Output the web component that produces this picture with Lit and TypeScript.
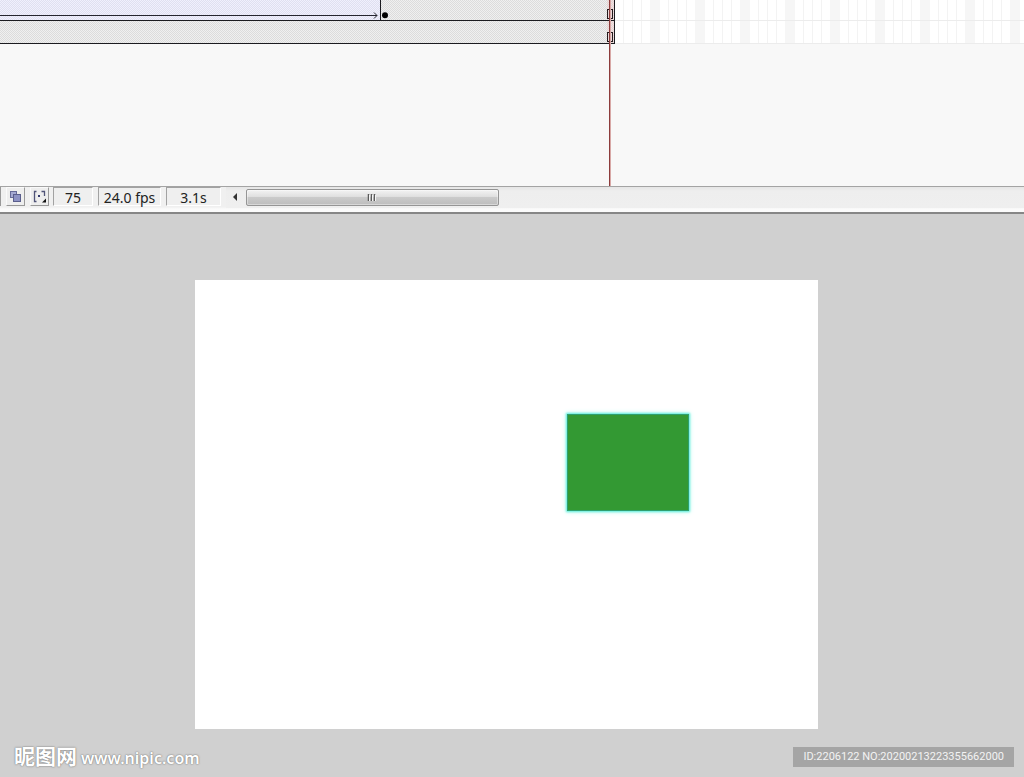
import { LitElement, html, css } from "lit";
import { customElement } from "lit/decorators.js";

@customElement("timeline-panel")
class TimelinePanel extends LitElement {
  static styles = css`
    :host {
      display: block;
      position: relative;
      height: 186px;
      background: #f8f8f8;
      overflow: hidden;
    }
    .row {
      display: flex;
      box-sizing: border-box;
      height: 23px;
    }
    .row.first {
      height: 21px;
    }
    .span {
      box-sizing: border-box;
      border-bottom: 1px solid #1c1c20;
      flex: none;
      position: relative;
    }
    .static {
      background:
        linear-gradient(#f0c8c866, #f0c8c866) right / 7px 100% no-repeat,
        repeating-conic-gradient(#dcdcdc 0 25%, #f0f0f0 0 50%) 0 0 / 2px 2px;
      border-right: 1px solid #1c1c20;
      width: 234px;
    }
    .static.full {
      width: 615px;
    }
    .tween {
      width: 381px;
      background: repeating-conic-gradient(#e0e0f0 0 25%, #f0f0fd 0 50%) 0 0 / 2px 2px;
      border-right: 1px solid #1c1c20;
    }
    svg {
      display: block;
    }
    .mark {
      position: absolute;
      bottom: 0;
    }
    .arrow {
      right: 1px;
    }
    .dot {
      left: 0;
    }
    .end {
      right: 0;
    }
    .frames {
      flex: 1;
      border-bottom: 1px solid #ececec;
      background:
        linear-gradient(90deg, transparent 35px, #f6f6f6 35px 45px) 0 0 / 45px 100%,
        linear-gradient(90deg, transparent 8px, #f3f3f3 8px 10px, #fff 10px) 0 0 / 9px 100%,
        #fff;
    }
    .playhead {
      position: absolute;
      top: 0;
      bottom: 0;
      left: 609px;
      width: 1px;
      background: #8c3c3c;
      border-right: 1px solid #d8a8a6;
    }
  `;

  private endMark() {
    return html`<svg class="mark end" width="8" height="14" viewBox="0 0 8 14">
      <rect x="1.5" y="3.5" width="5" height="9" fill="#ead8d8" stroke="#241a1c" />
    </svg>`;
  }

  render() {
    return html`
      <div class="row first">
        <div class="span tween">
          <svg class="mark arrow" width="380" height="10" viewBox="0 0 380 10">
            <path d="M0 5.5H378M375 2.5L378 5.5L375 8.5" fill="none" stroke="#25252e" />
          </svg>
        </div>
        <div class="span static">
          <svg class="mark dot" width="9" height="10" viewBox="0 0 9 10">
            <circle cx="4" cy="5.2" r="3" fill="#000" />
          </svg>
          ${this.endMark()}
        </div>
        <div class="frames"></div>
      </div>
      <div class="row">
        <div class="span static full">${this.endMark()}</div>
        <div class="frames"></div>
      </div>
      <div class="playhead"></div>
    `;
  }
}

@customElement("status-strip")
class StatusStrip extends LitElement {
  static styles = css`
    :host {
      display: flex;
      box-sizing: border-box;
      height: 28px;
      border-top: 1px solid #a4a4a4;
      border-bottom: 2px solid #868686;
      background: linear-gradient(#f0f0f0 20px, #fbfbfb 22px);
      font: 14px/19px "Noto Sans", sans-serif;
      color: #222;
    }
    button {
      appearance: none;
      margin: 0;
      padding: 0;
      border: 0;
      background: none;
    }
    svg {
      display: block;
    }
    .tools {
      display: flex;
      gap: 5px;
      padding-left: 5px;
      border-left: 1px solid #999;
      height: 19px;
    }
    .tool {
      width: 19px;
      height: 19px;
      box-sizing: border-box;
      border: 1px solid #fafafa;
      border-right-color: #999;
      border-bottom-color: #999;
      background: #eee;
    }
    .fields {
      display: flex;
      gap: 5px;
      margin-left: 4px;
      height: 19px;
    }
    .field {
      box-sizing: border-box;
      border: 1px solid #a2a2a2;
      border-right-color: #fff;
      border-bottom-color: #fff;
      background: #efefef;
      text-align: center;
      white-space: nowrap;
    }
    .frame {
      width: 40px;
    }
    .rate {
      width: 63px;
    }
    .time {
      width: 55px;
    }
    .scroll {
      flex: 1;
      display: flex;
      height: 21px;
      margin-left: 5px;
      background: linear-gradient(#e6e6e6, #eee 4px, #efefef);
    }
    .back {
      width: 20px;
      height: 20px;
    }
    .thumb {
      width: 253px;
      height: 17px;
      margin-top: 2px;
      box-sizing: border-box;
      display: flex;
      justify-content: center;
      align-items: center;
      border: 1px solid #959595;
      border-radius: 2px;
      background: linear-gradient(#f3f3f3, #dfdfdf 45%, #cacaca 50%, #bdbdbd);
      box-shadow: inset 0 0 0 1px #ffffff66;
    }
  `;

  render() {
    return html`
      <div class="tools">
        <button class="tool" aria-label="Edit multiple frames">
          <svg width="17" height="17" viewBox="0 0 17 17">
            <rect x="3.5" y="3.5" width="6" height="6" fill="#a5a9d2" stroke="#666a98" />
            <rect x="6.5" y="6.5" width="7" height="7" fill="#8d92c4" stroke="#5a5e8c" />
          </svg>
        </button>
        <button class="tool" aria-label="Modify markers">
          <svg width="17" height="17" viewBox="0 0 17 17">
            <path d="M5.5 3.5H3.5V13.5H5.5M10.5 3.5H13.5V8" fill="none" stroke="#505478" stroke-width="1.3" />
            <rect x="7" y="7" width="2" height="2" fill="#353b70" />
            <path d="M15 10.5V14.5H11Z" fill="#111" />
          </svg>
        </button>
      </div>
      <div class="fields">
        <div class="field frame">75</div>
        <div class="field rate">24.0 fps</div>
        <div class="field time">3.1s</div>
      </div>
      <div class="scroll">
        <button class="back" aria-label="Scroll left">
          <svg width="20" height="20" viewBox="0 0 20 20">
            <path d="M11 6V14L7 10Z" fill="#333" />
          </svg>
        </button>
        <button class="thumb" aria-label="Timeline position">
          <svg width="12" height="8" viewBox="0 0 12 8">
            <path d="M1.5 0V7M4.5 0V7M7.5 0V7" stroke="#5a5a5a" stroke-width="1.5" />
            <path d="M2.5 1V7M5.5 1V7M8.5 1V7" stroke="#f4f4f4" />
          </svg>
        </button>
      </div>
    `;
  }
}

@customElement("stage-area")
class StageArea extends LitElement {
  static styles = css`
    :host {
      display: flex;
      flex-direction: column;
      flex: 1;
      box-sizing: border-box;
      padding-top: 66px;
      background: #d0d0d0;
    }
    .canvas {
      position: relative;
      width: 623px;
      height: 449px;
      margin-left: 195px;
      background: #fff;
    }
    .shape {
      position: absolute;
      left: 372px;
      top: 134px;
      width: 122px;
      height: 97px;
      box-sizing: border-box;
      border: 1px solid #2da071;
      background: #339933;
      box-shadow: 0 0 2px 1px #5feedb, 0 0 5px 1px #c8faf2;
    }
    .footer {
      display: flex;
      justify-content: space-between;
      align-items: center;
      margin-top: auto;
      height: 40px;
      padding: 0 10px 0 14px;
      white-space: nowrap;
    }
    .brand {
      display: flex;
      align-items: center;
      gap: 4px;
      color: #fff;
      text-decoration: none;
      text-shadow: 0 0 2px #777, 0 0 1px #888;
    }
    .name {
      font: 700 21px/34px "Noto Sans CJK SC", sans-serif;
      height: 38px;
    }
    .site {
      font: 600 16px/34px "Noto Sans", sans-serif;
      height: 32px;
    }
    .code {
      box-sizing: border-box;
      height: 20px;
      padding: 0 10px;
      background: #a5a5a5;
      color: #f3f3f3;
      font: 11px/20px Roboto, sans-serif;
    }
  `;

  render() {
    return html`
      <div class="canvas"><div class="shape"></div></div>
      <div class="footer">
        <a class="brand" href="#"><span class="name">昵图网</span><span class="site">www.nipic.com</span></a>
        <div class="code">ID:2206122 NO:20200213223355662000</div>
      </div>
    `;
  }
}

@customElement("app-root")
class AppRoot extends LitElement {
  static styles = css`
    :host {
      display: flex;
      flex-direction: column;
      min-height: 100vh;
    }
  `;

  render() {
    return html`
      <timeline-panel></timeline-panel>
      <status-strip></status-strip>
      <stage-area></stage-area>
    `;
  }
}
